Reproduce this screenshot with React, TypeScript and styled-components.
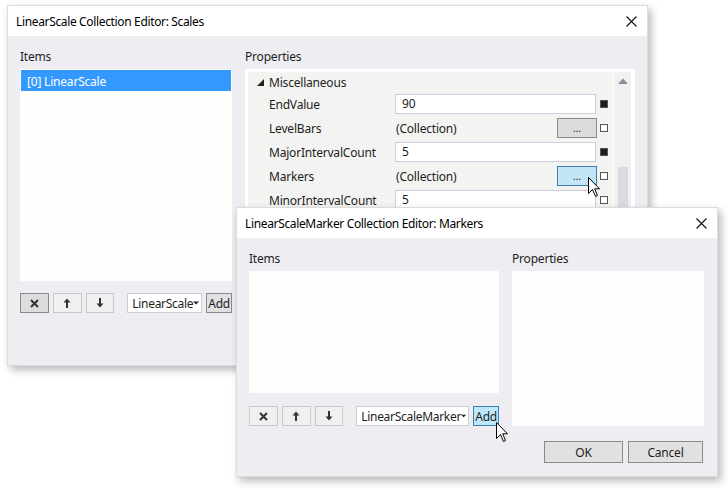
import React from 'react';
import styled, { createGlobalStyle, css } from 'styled-components';

const GlobalStyle = createGlobalStyle`
  html, body {
    margin: 0;
    padding: 0;
    background: #ffffff;
  }
  body {
    font-family: "Noto Sans", "Liberation Sans", sans-serif;
    font-size: 12px;
    color: #1e1e1e;
  }
`;

const Desktop = styled.div`
  position: relative;
  width: 728px;
  height: 490px;
  overflow: hidden;
  background: #ffffff;
`;

const Window = styled.div<{ $x: number; $y: number; $w: number; $h: number }>`
  position: absolute;
  left: ${(p) => p.$x}px;
  top: ${(p) => p.$y}px;
  width: ${(p) => p.$w}px;
  height: ${(p) => p.$h}px;
  display: flex;
  flex-direction: column;
  background: #eeedf2;
  border: 1px solid #dcdcdc;
  box-sizing: border-box;
  box-shadow: 3px 4px 8px rgba(0, 0, 0, 0.28);
`;

const TitleBar = styled.div`
  height: 30px;
  flex-shrink: 0;
  display: flex;
  align-items: center;
  justify-content: space-between;
  padding: 0 10px 0 8px;
  background: #ffffff;
`;

const TitleText = styled.div`
  font-size: 12px;
  color: #000;
  letter-spacing: -0.35px;
`;

const CloseButton = styled.div`
  width: 12px;
  height: 12px;
  display: flex;
  align-items: center;
  justify-content: center;
`;

const Body = styled.div<{ $cols: string }>`
  flex: 1;
  display: grid;
  grid-template-columns: ${(p) => p.$cols};
  column-gap: 13px;
  padding: 13px 13px 0 12px;
  min-height: 0;
`;

const Column = styled.div`
  display: flex;
  flex-direction: column;
  min-height: 0;
`;

const Label = styled.div`
  height: 16px;
  line-height: 16px;
  margin-bottom: 4px;
  letter-spacing: -0.2px;
`;

const ListBox = styled.div<{ $h: number }>`
  height: ${(p) => p.$h}px;
  flex-shrink: 0;
  background: #fefefc;
  padding: 1px;
  box-sizing: border-box;
`;

const SelectedItem = styled.div`
  height: 21px;
  line-height: 21px;
  padding: 1px 0 0 6px;
  box-sizing: border-box;
  background: #3399ff;
  color: #ffffff;
  letter-spacing: -0.2px;
`;

const ButtonRow = styled.div<{ $top: number }>`
  display: flex;
  align-items: center;
  margin-top: ${(p) => p.$top}px;
  height: 20px;
`;

const IconButton = styled.div<{ $active?: boolean }>`
  width: 29px;
  height: 20px;
  box-sizing: border-box;
  margin-right: 4px;
  display: flex;
  align-items: center;
  justify-content: center;
  background: #f0f0f0;
  border: 1px solid #c8c8c8;
  ${(p) =>
    p.$active &&
    css`
      background: #dddddd;
      border-color: #8a8a8a;
    `}
`;

const Combo = styled.div<{ $w: number }>`
  width: ${(p) => p.$w}px;
  height: 20px;
  box-sizing: border-box;
  margin-left: 9px;
  display: flex;
  align-items: center;
  justify-content: space-between;
  padding: 0 2px 0 4px;
  background: #ffffff;
  border: 1px solid #cfcfcf;
  letter-spacing: -0.3px;
`;

const AddButton = styled.div<{ $hover?: boolean }>`
  width: 26px;
  height: 20px;
  box-sizing: border-box;
  margin-left: 4px;
  display: flex;
  align-items: center;
  justify-content: center;
  background: #e1e1e1;
  border: 1px solid #8a8a8a;
  letter-spacing: -0.3px;
  ${(p) =>
    p.$hover &&
    css`
      background: #bee6fd;
      border-color: #3c7fb1;
    `}
`;

const PropPanel = styled.div`
  flex: 1;
  display: flex;
  background: #ffffff;
  padding: 3px 4px 0 3px;
  min-height: 0;
`;

const PropGrid = styled.div`
  flex: 1;
  background: #f3f3f1;
  margin-right: 1px;
`;

const ScrollTrack = styled.div`
  width: 17px;
  background: #f0f0f0;
  display: flex;
  flex-direction: column;
  align-items: center;
  padding-top: 6px;
`;

const ScrollThumb = styled.div`
  width: 10px;
  height: 120px;
  margin-top: 83px;
  background: #dadae3;
`;

const CategoryRow = styled.div`
  height: 20px;
  display: flex;
  align-items: center;
  padding-left: 9px;
  letter-spacing: -0.2px;
`;

const Caret = styled.div`
  width: 12px;
  display: flex;
  align-items: center;
`;

const PropRow = styled.div`
  height: 24px;
  display: flex;
  align-items: center;
`;

const PropName = styled.div`
  width: 147px;
  padding-left: 21px;
  box-sizing: border-box;
  letter-spacing: -0.2px;
  white-space: nowrap;
`;

const ValueCell = styled.div`
  width: 202px;
  height: 20px;
  display: flex;
  align-items: center;
  justify-content: space-between;
`;

const TextInput = styled.div`
  width: 201px;
  height: 20px;
  box-sizing: border-box;
  border: 1px solid #cccedb;
  background: #ffffff;
  padding-left: 6px;
  line-height: 18px;
`;

const CollectionText = styled.div`
  padding-left: 1px;
  letter-spacing: -0.2px;
`;

const EllipsisButton = styled.div<{ $hover?: boolean }>`
  width: 40px;
  height: 20px;
  box-sizing: border-box;
  display: flex;
  align-items: flex-end;
  justify-content: center;
  padding-bottom: 4px;
  font-size: 10px;
  line-height: 10px;
  background: #dcdcdc;
  border: 1px solid #8a8a8a;
  ${(p) =>
    p.$hover &&
    css`
      background: #c4e5f8;
      border-color: #3c7fb1;
    `}
`;

const Marker = styled.div<{ $set?: boolean }>`
  width: 8px;
  height: 8px;
  box-sizing: border-box;
  margin-left: 3px;
  border: 1px solid #555;
  background: ${(p) => (p.$set ? '#1e1e1e' : '#ffffff')};
`;

const Footer = styled.div`
  display: flex;
  justify-content: flex-end;
  gap: 5px;
  padding: 14px 14px 13px 0;
`;

const DialogButton = styled.div<{ $w: number }>`
  width: ${(p) => p.$w}px;
  height: 22px;
  box-sizing: border-box;
  display: flex;
  align-items: center;
  justify-content: center;
  background: #e1e1e1;
  border: 1px solid #8a8a8a;
  letter-spacing: -0.2px;
`;

const Cursor = styled.svg<{ $x: number; $y: number }>`
  position: absolute;
  left: ${(p) => p.$x}px;
  top: ${(p) => p.$y}px;
`;

const CloseIcon = () => (
  <svg width="11" height="11" viewBox="0 0 11 11">
    <path d="M0.5 0.5L10.5 10.5M10.5 0.5L0.5 10.5" stroke="#111" strokeWidth="1.1" />
  </svg>
);

const DeleteIcon = () => (
  <svg width="9" height="9" viewBox="0 0 9 9">
    <path d="M1 1L8 8M8 1L1 8" stroke="#333" strokeWidth="2" />
  </svg>
);

const UpIcon = () => (
  <svg width="8" height="10" viewBox="0 0 8 10">
    <path d="M4 10V3" stroke="#333" strokeWidth="2" />
    <path d="M0.5 4.5L4 0.5L7.5 4.5Z" fill="#333" />
  </svg>
);

const DownIcon = () => (
  <svg width="8" height="10" viewBox="0 0 8 10">
    <path d="M4 0V7" stroke="#333" strokeWidth="2" />
    <path d="M0.5 5.5L4 9.5L7.5 5.5Z" fill="#333" />
  </svg>
);

const DropArrow = () => (
  <svg width="6" height="4" viewBox="0 0 6 4">
    <path d="M0 0.5H6L3 3.5Z" fill="#222" />
  </svg>
);

const CaretIcon = () => (
  <svg width="7" height="7" viewBox="0 0 7 7">
    <path d="M7 0V7H0Z" fill="#222" />
  </svg>
);

const ScrollUpIcon = () => (
  <svg width="10" height="6" viewBox="0 0 10 6">
    <path d="M0 6L5 0.5L10 6Z" fill="#8a8d9c" />
  </svg>
);

const PointerCursor = ({ x, y }: { x: number; y: number }) => (
  <Cursor $x={x} $y={y} width="13" height="21" viewBox="0 0 13 21">
    <path
      d="M0.5 0.5V16.5L4.5 12.5L7.5 19.5L9.5 18.5L6.7 11.8H11.5Z"
      fill="#ffffff"
      stroke="#000000"
      strokeWidth="1"
      strokeLinejoin="miter"
    />
  </Cursor>
);

const ItemButtons = ({ top, active, comboWidth, comboText, addHover }: {
  top: number;
  active?: boolean;
  comboWidth: number;
  comboText: string;
  addHover?: boolean;
}) => (
  <ButtonRow $top={top}>
    <IconButton $active={active}>
      <DeleteIcon />
    </IconButton>
    <IconButton>
      <UpIcon />
    </IconButton>
    <IconButton>
      <DownIcon />
    </IconButton>
    <Combo $w={comboWidth}>
      <span>{comboText}</span>
      <DropArrow />
    </Combo>
    <AddButton $hover={addHover}>Add</AddButton>
  </ButtonRow>
);

const App = () => {
  return (
    <Desktop>
      <GlobalStyle />

      <Window $x={7} $y={5} $w={641} $h={361}>
        <TitleBar>
          <TitleText>LinearScale Collection Editor: Scales</TitleText>
          <CloseButton>
            <CloseIcon />
          </CloseButton>
        </TitleBar>
        <Body $cols="212px 390px">
          <Column>
            <Label>Items</Label>
            <ListBox $h={212}>
              <SelectedItem>[0] LinearScale</SelectedItem>
            </ListBox>
            <ItemButtons top={12} active comboWidth={75} comboText="LinearScale" />
          </Column>
          <Column>
            <Label>Properties</Label>
            <PropPanel>
              <PropGrid>
                <CategoryRow>
                  <Caret>
                    <CaretIcon />
                  </Caret>
                  Miscellaneous
                </CategoryRow>
                <PropRow>
                  <PropName>EndValue</PropName>
                  <ValueCell>
                    <TextInput>90</TextInput>
                  </ValueCell>
                  <Marker $set />
                </PropRow>
                <PropRow>
                  <PropName>LevelBars</PropName>
                  <ValueCell>
                    <CollectionText>(Collection)</CollectionText>
                    <EllipsisButton>...</EllipsisButton>
                  </ValueCell>
                  <Marker />
                </PropRow>
                <PropRow>
                  <PropName>MajorIntervalCount</PropName>
                  <ValueCell>
                    <TextInput>5</TextInput>
                  </ValueCell>
                  <Marker $set />
                </PropRow>
                <PropRow>
                  <PropName>Markers</PropName>
                  <ValueCell>
                    <CollectionText>(Collection)</CollectionText>
                    <EllipsisButton $hover>...</EllipsisButton>
                  </ValueCell>
                  <Marker />
                </PropRow>
                <PropRow>
                  <PropName>MinorIntervalCount</PropName>
                  <ValueCell>
                    <TextInput>5</TextInput>
                  </ValueCell>
                  <Marker />
                </PropRow>
              </PropGrid>
              <ScrollTrack>
                <ScrollUpIcon />
                <ScrollThumb />
              </ScrollTrack>
            </PropPanel>
          </Column>
        </Body>
      </Window>

      <PointerCursor x={588} y={177} />

      <Window $x={236} $y={207} $w={482} $h={270}>
        <TitleBar>
          <TitleText>LinearScaleMarker Collection Editor: Markers</TitleText>
          <CloseButton>
            <CloseIcon />
          </CloseButton>
        </TitleBar>
        <Body $cols="250px 192px">
          <Column>
            <Label>Items</Label>
            <ListBox $h={122} />
            <ItemButtons top={13} comboWidth={113} comboText="LinearScaleMarker" addHover />
          </Column>
          <Column>
            <Label>Properties</Label>
            <ListBox $h={155} />
          </Column>
        </Body>
        <Footer>
          <DialogButton $w={79}>OK</DialogButton>
          <DialogButton $w={75}>Cancel</DialogButton>
        </Footer>
      </Window>

      <PointerCursor x={496} y={422} />
    </Desktop>
  );
};

export default App;
